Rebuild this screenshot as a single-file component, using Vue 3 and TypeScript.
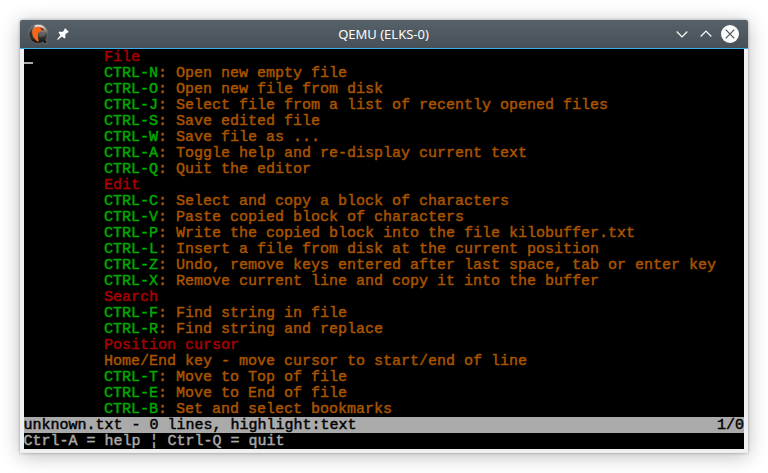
<script setup lang="ts">
interface Line {
  heading?: string
  shortcut?: string
  text?: string
}

const lines: Line[] = [
  { heading: 'File' },
  { shortcut: 'CTRL-N', text: 'Open new empty file' },
  { shortcut: 'CTRL-O', text: 'Open new file from disk' },
  { shortcut: 'CTRL-J', text: 'Select file from a list of recently opened files' },
  { shortcut: 'CTRL-S', text: 'Save edited file' },
  { shortcut: 'CTRL-W', text: 'Save file as ...' },
  { shortcut: 'CTRL-A', text: 'Toggle help and re-display current text' },
  { shortcut: 'CTRL-Q', text: 'Quit the editor' },
  { heading: 'Edit' },
  { shortcut: 'CTRL-C', text: 'Select and copy a block of characters' },
  { shortcut: 'CTRL-V', text: 'Paste copied block of characters' },
  { shortcut: 'CTRL-P', text: 'Write the copied block into the file kilobuffer.txt' },
  { shortcut: 'CTRL-L', text: 'Insert a file from disk at the current position' },
  { shortcut: 'CTRL-Z', text: 'Undo, remove keys entered after last space, tab or enter key' },
  { shortcut: 'CTRL-X', text: 'Remove current line and copy it into the buffer' },
  { heading: 'Search' },
  { shortcut: 'CTRL-F', text: 'Find string in file' },
  { shortcut: 'CTRL-R', text: 'Find string and replace' },
  { heading: 'Position cursor' },
  { text: 'Home/End key - move cursor to start/end of line' },
  { shortcut: 'CTRL-T', text: 'Move to Top of file' },
  { shortcut: 'CTRL-E', text: 'Move to End of file' },
  { shortcut: 'CTRL-B', text: 'Set and select bookmarks' },
]
</script>

<template>
  <div class="desktop">
    <section class="window">
      <header class="titlebar">
        <div class="side">
          <svg class="logo" width="20" height="20" viewBox="0 0 20 20">
            <defs>
              <linearGradient id="ball" x1="0" y1="0" x2="0" y2="1">
                <stop offset="0" stop-color="#f4f4f4" />
                <stop offset="0.25" stop-color="#a5a09e" />
                <stop offset="0.5" stop-color="#4c4c4c" />
                <stop offset="1" stop-color="#0a0a0a" />
              </linearGradient>
            </defs>
            <path d="M10 .4a9.500 9.500 0 1 0 5.200 17.500l1.100 1.600h3l-1.500-3.800A9.500 9.500 0 0 0 10 .4z" fill="url(#ball)" stroke="#7d7573" stroke-width=".7" />
            <path d="M1.200 9C1.600 5 4 2.200 7.300 1.300L4.300 6v7C2.500 12.500 1.500 11 1.200 9z" fill="#1c1c1c" opacity=".6" />
            <path d="M4.300 9.800C3.800 5.500 6.300 2.700 10 2.700c2.700 0 4.600 1 5.300 3.100L13 7.300c-2 .2-2.900 1.400-3 3.200-.1 2.500.6 4.700.6 7.500C7.800 16.800 4.800 13.500 4.300 9.800z" fill="#f76517" />
            <path d="M12.300 3.700l2.900.8 1 2.200-3-.6z" fill="#7a2c0c" />
            <path d="M11 8.800c2.500 1 5 .5 7.200-1 .3 3-2 5-6.700 5.200z" fill="#707070" opacity=".6" />
          </svg>
          <svg class="pin" width="12" height="12" viewBox="0 0 12 12">
            <path d="M8.200.3l3.500 3.500-.8 1-1-.1-1.700 2 .3 2.800-1.200 1-2.300-2L1 11.700H.3V11l3.200-4-2-2.200 1-1.200 2.800.3 2-1.700-.1-1z" fill="#fff" />
          </svg>
        </div>
        <h1 class="title">QEMU (ELKS-0)</h1>
        <div class="side controls">
          <svg width="12" height="12" viewBox="0 0 12 12"><path d="M.7 3.500L6 8.800l5.300-5.300" class="chevron" /></svg>
          <svg width="12" height="12" viewBox="0 0 12 12"><path d="M.7 8.500L6 3.200l5.300 5.300" class="chevron" /></svg>
          <svg width="18" height="18" viewBox="0 0 18 18">
            <circle cx="9" cy="9" r="9" fill="#fcfcfc" />
            <path d="M4.700 4.700l8.600 8.600M13.300 4.700l-8.600 8.600" fill="none" stroke="#475057" stroke-width="1.200" />
          </svg>
        </div>
      </header>
      <main class="screen">
        <span class="cursor"></span>
        <div v-for="(line, i) in lines" :key="i" class="row help">
          <span v-if="line.heading" class="heading">{{ line.heading }}</span>
          <template v-else><span v-if="line.shortcut" class="shortcut">{{ line.shortcut }}</span><span v-if="line.shortcut">: </span><span>{{ line.text }}</span></template>
        </div>
        <div class="row status"><span>unknown.txt - 0 lines, highlight:text</span><span>1/0</span></div>
        <div class="row message">Ctrl-A = help ¦ Ctrl-Q = quit</div>
      </main>
    </section>
  </div>
</template>

<style>
body {
  margin: 0;
  background: #fff;
}
</style>

<style scoped>
.desktop {
  box-sizing: border-box;
  width: 768px;
  height: 473px;
  padding: 20px;
  overflow: hidden;
  background: #fff;
}
.window {
  box-sizing: border-box;
  width: 728px;
  height: 433px;
  background: #eff0f1;
  border-radius: 2px 2px 0 0;
  box-shadow: 0 3px 20px rgba(0, 0, 0, 0.27), 0 0 3px rgba(0, 0, 0, 0.32);
}
.titlebar {
  box-sizing: border-box;
  display: grid;
  grid-template-columns: 1fr auto 1fr;
  align-items: center;
  height: 29px;
  padding: 0 9px 0 8px;
  border-bottom: 1px solid #3daee9;
  border-radius: 2px 2px 0 0;
  background: linear-gradient(#566169, #475057);
}
.side {
  display: flex;
  align-items: center;
  gap: 9px;
}
.logo,
.pin {
  display: block;
}
.controls {
  justify-content: flex-end;
  gap: 12px;
}
.controls svg:last-child {
  margin-left: -3px;
}
.chevron {
  fill: none;
  stroke: #fcfcfc;
  stroke-width: 1.2;
}
.title {
  margin: 0;
  font: 400 13px/28px 'Noto Sans', sans-serif;
  color: #fcfcfc;
}
.screen {
  position: relative;
  width: 720px;
  height: 400px;
  margin-left: 4px;
  overflow: hidden;
  background: #000;
  color: #aa5500;
  font-family: 'Liberation Mono', monospace;
  font-size: 15px;
  letter-spacing: -0.002px;
  -webkit-text-stroke: 0.45px currentColor;
}
.cursor {
  position: absolute;
  left: 0;
  top: 13px;
  width: 9px;
  height: 2px;
  background: #aaa;
}
.row {
  box-sizing: border-box;
  height: 16px;
  padding-top: 1px;
  line-height: 16px;
  white-space: pre;
}
.help {
  padding-left: 80px;
}
.heading {
  color: #aa0000;
}
.shortcut {
  color: #00aa00;
}
.status {
  display: flex;
  justify-content: space-between;
  background: #aaa;
  color: #000;
}
.message {
  color: #aaa;
}
.status,
.message {
  text-indent: -0.5px;
}
</style>
